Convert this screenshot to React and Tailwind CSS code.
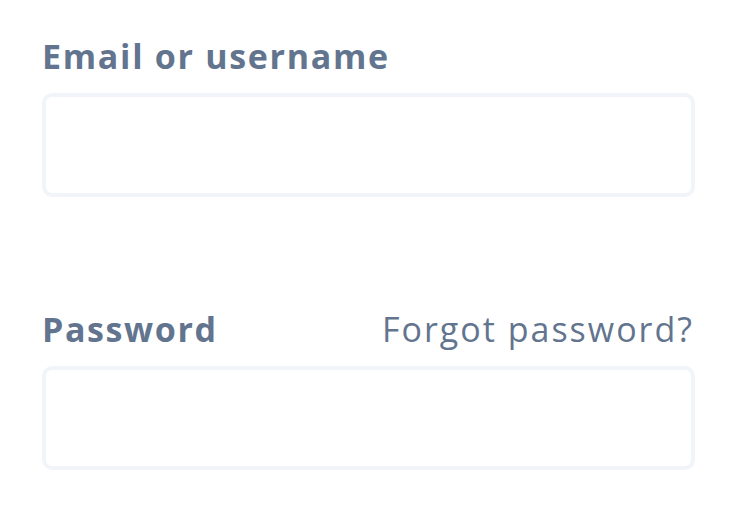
import React from 'react';

export default function App() {
    return (
        <div className="min-h-screen bg-white px-[42px] pt-[34px]" style={{ fontFamily: '"Open Sans", Lato, sans-serif' }}>
            <div className="w-[653px]">
                <label className="block text-[34px] leading-[44px] font-bold text-slate-500 tracking-[1.7px]">
                    Email or username
                </label>
                <input
                    type="text"
                    className="mt-[15px] block w-full h-[104px] rounded-[10px] border-4 border-slate-100 bg-white outline-none"
                />

                <div className="mt-[110px] flex items-baseline justify-between">
                    <label className="text-[34px] leading-[44px] font-bold text-slate-500 tracking-[1.6px]">Password</label>
                    <a href="#" className="text-[34px] leading-[44px] text-slate-500 tracking-[2px] mr-[1px]">Forgot password?</a>
                </div>
                <input
                    type="password"
                    className="mt-[15px] block w-full h-[104px] rounded-[10px] border-4 border-slate-100 bg-white outline-none"
                />
            </div>
        </div>
    );
}
